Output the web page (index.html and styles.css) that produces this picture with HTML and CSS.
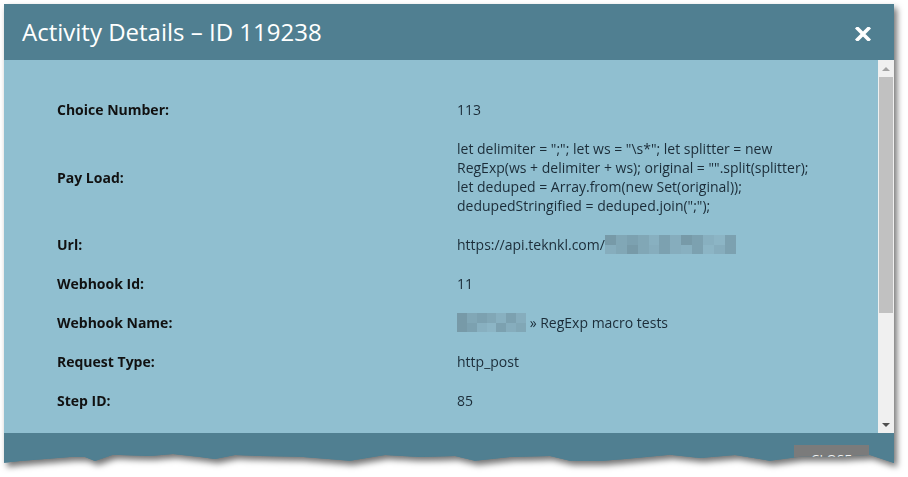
FILE: index.html
```html
<!DOCTYPE html>
<html>
<head>
  <meta charset="utf-8">
  <link rel="stylesheet" href="styles.css">
</head>
<body>
  <div class="stage">
    <div class="dialog">
      <div class="header">
        <span class="title">Activity Details – ID 119238</span>
        <button class="close-x" aria-label="Close">
          <svg width="16" height="14" viewBox="0 0 16 14">
            <path d="M2.5 1.5 L13.5 12.5 M13.5 1.5 L2.5 12.5" stroke="#fff" stroke-width="3.6" stroke-linecap="square"/>
          </svg>
        </button>
      </div>

      <div class="body">
        <div class="content">
          <table class="details">
            <tr>
              <td class="label">Choice Number:</td>
              <td class="value">113</td>
            </tr>
            <tr>
              <td class="label">Pay Load:</td>
              <td class="value">let delimiter = ";"; let ws = "\s*"; let splitter = new RegExp(ws + delimiter + ws); original = "".split(splitter); let deduped = Array.from(new Set(original)); dedupedStringified = deduped.join(";");</td>
            </tr>
            <tr>
              <td class="label">Url:</td>
              <td class="value">https://api.teknkl.com/<span class="mosaic mosaic-url"><i></i><i></i><i></i><i></i><i></i><i></i><i></i><i></i><i></i><i></i><i></i><i></i><i></i><i></i><i></i><i></i><i></i><i></i><i></i><i></i><i></i><i></i><i></i><i></i></span></td>
            </tr>
            <tr>
              <td class="label">Webhook Id:</td>
              <td class="value">11</td>
            </tr>
            <tr>
              <td class="label">Webhook Name:</td>
              <td class="value"><span class="mosaic mosaic-name"><i></i><i></i><i></i><i></i><i></i><i></i><i></i><i></i><i></i><i></i><i></i><i></i><i></i><i></i></span> » RegExp macro tests</td>
            </tr>
            <tr>
              <td class="label">Request Type:</td>
              <td class="value">http_post</td>
            </tr>
            <tr>
              <td class="label">Step ID:</td>
              <td class="value">85</td>
            </tr>
          </table>
        </div>

        <div class="scrollbar">
          <span class="arrow arrow-up"></span>
          <div class="track"><div class="thumb"></div></div>
          <span class="arrow arrow-down"></span>
        </div>
      </div>

      <div class="footer">
        <button class="btn-close">CLOSE</button>
      </div>
    </div>
  </div>
</body>
</html>
```

FILE: styles.css
```css
* {
  margin: 0;
  padding: 0;
  box-sizing: border-box;
}

body {
  background: #fff;
  font-family: 'Open Sans', 'DejaVu Sans', sans-serif;
  width: 908px;
  height: 477px;
  overflow: hidden;
}

.stage {
  padding: 4px 0 0 4px;
  filter: drop-shadow(3px 4px 3px rgba(0, 0, 0, 0.55));
}

.dialog {
  width: 890px;
  height: 462px;
  display: flex;
  flex-direction: column;
  background: #507f91;
  /* torn paper bottom edge */
  clip-path: polygon(0 0, 890px 0, 890px 459px, 866px 451px, 836px 452.7px, 796px 452.7px,
    766px 456.7px, 731px 451px, 696px 454px, 666px 450.7px, 621px 455px, 596px 457px,
    566px 456.7px, 546px 452px, 506px 453px, 471px 456.7px, 451px 452px, 416px 453px,
    381px 451px, 346px 456.7px, 296px 452.7px, 256px 452px, 231px 451px, 211px 455px,
    196px 453px, 169px 450px, 146px 452px, 109px 450.7px, 91px 457px, 81px 453px,
    66px 453px, 16px 457px, 0 458.7px);
}

.header {
  height: 56px;
  flex-shrink: 0;
  display: flex;
  align-items: center;
  justify-content: space-between;
  padding: 0 23px 0 18px;
  background: #507f91;
}

.title {
  color: #fff;
  font-size: 24px;
  font-weight: 400;
  margin-top: -1px;
}

.close-x {
  background: none;
  border: none;
  width: 16px;
  height: 14px;
  display: flex;
  margin-top: 4px;
  cursor: pointer;
}

.body {
  height: 373px;
  flex-shrink: 0;
  display: flex;
  background: #90bfd0;
}

.content {
  flex: 1;
  overflow: hidden;
  padding: 30px 62px 0 53px;
}

.details {
  width: 100%;
  border-collapse: collapse;
}

.details td {
  padding: 10px 0;
  line-height: 19px;
  vertical-align: middle;
}

.label {
  width: 400px;
  font-size: 14px;
  font-weight: 700;
  color: #111;
}

.value {
  font-size: 14px;
  color: #1b2c38;
}

/* pixelated redaction */
.mosaic {
  display: inline-grid;
  vertical-align: top;
  grid-template-rows: repeat(2, 1fr);
}

.mosaic-url {
  grid-template-columns: repeat(12, 1fr);
  width: 131px;
  height: 19px;
}

.mosaic-name {
  grid-template-columns: repeat(7, 1fr);
  width: 69px;
  height: 19px;
}

.mosaic i {
  background: #86adbd;
}

.mosaic i:nth-child(2n) {
  background: #81a7b6;
}

.mosaic i:nth-child(3n) {
  background: #7ca1b0;
}

.mosaic i:nth-child(5n) {
  background: #88b0c0;
}

.mosaic i:nth-child(7n+1) {
  background: #779aa8;
}

.mosaic i:nth-child(11n) {
  background: #8cb5c5;
}

.scrollbar {
  width: 16px;
  flex-shrink: 0;
  display: flex;
  flex-direction: column;
  align-items: center;
  background: #f0f0f0;
}

.arrow {
  height: 17px;
  width: 16px;
  display: flex;
  align-items: center;
  justify-content: center;
  flex-shrink: 0;
}

.arrow::before {
  content: '';
  border-left: 4px solid transparent;
  border-right: 4px solid transparent;
}

.arrow-up::before {
  border-bottom: 4px solid #a3a3a3;
}

.arrow-down::before {
  border-top: 4px solid #505050;
}

.track {
  flex: 1;
  width: 100%;
  padding: 0 1px;
}

.thumb {
  height: 236px;
  background: #c1c1c1;
}

.footer {
  flex: 1;
  display: flex;
  justify-content: flex-end;
  align-items: flex-start;
  padding: 12px 25px 0 0;
  background: #507f91;
}

.btn-close {
  width: 75px;
  height: 26px;
  background: #7b7b7b;
  border: none;
  color: #f2f2f2;
  font-family: inherit;
  font-size: 13px;
  letter-spacing: 0.3px;
  padding-top: 1px;
  cursor: pointer;
}
```
